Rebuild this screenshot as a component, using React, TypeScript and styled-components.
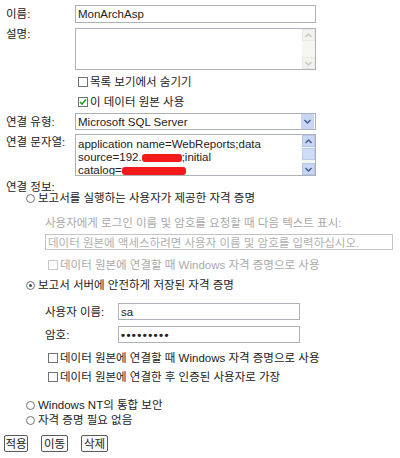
import React from 'react';
import styled, { createGlobalStyle, css } from 'styled-components';

const GlobalStyle = createGlobalStyle`
  body {
    margin: 0;
    background: #fff;
    font-family: 'Liberation Sans', 'Noto Sans CJK KR', sans-serif;
    font-size: 11.5px;
    color: #222;
  }
`;

const Page = styled.div`
  width: 400px;
  height: 458px;
  padding: 5px 0 0 6px;
  box-sizing: border-box;
  overflow: hidden;
`;

const Row = styled.div<{ $mt?: number; $h: number; $indent?: number; $top?: boolean }>`
  display: flex;
  align-items: ${({ $top }) => ($top ? 'flex-start' : 'center')};
  height: ${({ $h }) => $h}px;
  margin-top: ${({ $mt = 0 }) => $mt}px;
  margin-left: ${({ $indent = 0 }) => $indent}px;
  white-space: nowrap;
`;

const Label = styled.div<{ $w: number; $pt?: number }>`
  width: ${({ $w }) => $w}px;
  flex: none;
  padding-top: ${({ $pt = 0 }) => $pt}px;
  line-height: 12px;
`;

const boxBorder = css`
  border: 1px solid #aeb2b8;
  box-sizing: border-box;
  background: #fff;
`;

const TextBox = styled.div<{ $w: number; $disabled?: boolean }>`
  ${boxBorder}
  width: ${({ $w }) => $w}px;
  height: 100%;
  display: flex;
  align-items: center;
  padding-left: 2px;
  overflow: hidden;
  color: ${({ $disabled }) => ($disabled ? '#b0b0b0' : '#222')};
  border-color: ${({ $disabled }) => ($disabled ? '#c4c4c4' : '#aeb2b8')};
`;

const Dots = styled.span`
  font-weight: bold;
  letter-spacing: 1.4px;
`;

const AreaBox = styled.div`
  ${boxBorder}
  width: 241px;
  height: 100%;
  display: flex;
`;

const AreaText = styled.div`
  flex: 1;
  padding: 3px 0 0 2px;
  line-height: 13px;
  white-space: nowrap;
  overflow: hidden;
`;

const ScrollBar = styled.div`
  width: 13px;
  flex: none;
  display: flex;
  flex-direction: column;
  background: #f6f6f3;
`;

const ScrollBtn = styled.div<{ $active?: boolean }>`
  height: 12px;
  display: flex;
  align-items: center;
  justify-content: center;
  background: ${({ $active }) => ($active ? '#c8d6f4' : '#f2f2ee')};
  border: 1px solid ${({ $active }) => ($active ? '#b4c6ec' : '#ebebe6')};
  box-sizing: border-box;
`;

const Thumb = styled.div`
  height: 12px;
  margin: 1px 0;
  background: #cfdcf6;
  border: 1px solid #b9cbef;
  box-sizing: border-box;
`;

const Spacer = styled.div`
  flex: 1;
`;

const SelectBox = styled.div`
  ${boxBorder}
  width: 241px;
  height: 100%;
  display: flex;
  align-items: center;
  padding-left: 2px;
`;

const SelectText = styled.div`
  flex: 1;
`;

const DropBtn = styled.div`
  width: 13px;
  height: 15px;
  margin-right: 1px;
  background: #c8d6f4;
  display: flex;
  align-items: center;
  justify-content: center;
`;

const Redact = styled.span<{ $w: number }>`
  display: inline-block;
  width: ${({ $w }) => $w}px;
  height: 8px;
  background: #f21a1a;
  border-radius: 3px;
  vertical-align: -1px;
`;

const CheckBox = styled.span<{ $disabled?: boolean }>`
  width: 10px;
  height: 10px;
  flex: none;
  box-sizing: border-box;
  border: 1px solid ${({ $disabled }) => ($disabled ? '#c8c8c8' : '#6f7378')};
  background: #fff;
  margin-right: 2px;
  display: flex;
  align-items: center;
  justify-content: center;
`;

const Radio = styled.span<{ $on?: boolean }>`
  width: 9px;
  height: 9px;
  flex: none;
  box-sizing: border-box;
  border: 1px solid #6f7378;
  border-radius: 50%;
  margin-right: 3px;
  display: flex;
  align-items: center;
  justify-content: center;
  &::after {
    content: '';
    width: 3px;
    height: 3px;
    border-radius: 50%;
    background: ${({ $on }) => ($on ? '#2f5f2f' : 'transparent')};
  }
`;

const Text = styled.span<{ $muted?: boolean }>`
  color: ${({ $muted }) => ($muted ? '#a9a9a9' : '#222')};
  line-height: 12px;
`;

const Buttons = styled.div`
  display: flex;
  gap: 13px;
  margin: 9px 0 0 -2px;
  height: 17px;
`;

const Button = styled.button<{ $w: number }>`
  width: ${({ $w }) => $w}px;
  height: 17px;
  padding: 0;
  border: 1px solid #5a5a5a;
  border-radius: 2px;
  background: #fafafa;
  font: inherit;
  color: #222;
  line-height: 14px;
`;

const Chevron = ({ up, color }: { up?: boolean; color: string }) => (
  <svg width="7" height="5" viewBox="0 0 7 5">
    <path
      d={up ? 'M0.5 4 L3.5 1 L6.5 4' : 'M0.5 1 L3.5 4 L6.5 1'}
      fill="none"
      stroke={color}
      strokeWidth="1.4"
    />
  </svg>
);

const Check = () => (
  <svg width="8" height="8" viewBox="0 0 8 8">
    <path d="M1 4 L3 6 L7 1.5" fill="none" stroke="#21a121" strokeWidth="1.6" />
  </svg>
);

export default function App() {
  return (
    <Page>
      <GlobalStyle />
      <Row $h={18}>
        <Label $w={69}>이름:</Label>
        <TextBox $w={241}>MonArchAsp</TextBox>
      </Row>
      <Row $h={42} $mt={5} $top>
        <Label $w={69}>설명:</Label>
        <AreaBox>
          <AreaText />
          <ScrollBar>
            <ScrollBtn>
              <Chevron up color="#c8c8c0" />
            </ScrollBtn>
            <Spacer />
            <ScrollBtn>
              <Chevron color="#c8c8c0" />
            </ScrollBtn>
          </ScrollBar>
        </AreaBox>
      </Row>
      <Row $h={20} $mt={2} $indent={72}>
        <CheckBox />
        <Text>목록 보기에서 숨기기</Text>
      </Row>
      <Row $h={20} $indent={72}>
        <CheckBox>
          <Check />
        </CheckBox>
        <Text>이 데이터 원본 사용</Text>
      </Row>
      <Row $h={17} $mt={1}>
        <Label $w={69}>연결 유형:</Label>
        <SelectBox>
          <SelectText>Microsoft SQL Server</SelectText>
          <DropBtn>
            <Chevron color="#3e5a8c" />
          </DropBtn>
        </SelectBox>
      </Row>
      <Row $h={42} $mt={4} $top>
        <Label $w={69} $pt={2}>연결 문자열:</Label>
        <AreaBox>
          <AreaText>
            application name=WebReports;data
            <br />
            source=192.
            <Redact $w={40} />
            ;initial
            <br />
            catalog=
            <Redact $w={64} />
          </AreaText>
          <ScrollBar>
            <ScrollBtn $active>
              <Chevron up color="#3e5a8c" />
            </ScrollBtn>
            <Thumb />
            <Spacer />
            <ScrollBtn $active>
              <Chevron color="#3e5a8c" />
            </ScrollBtn>
          </ScrollBar>
        </AreaBox>
      </Row>
      <Row $h={11} $mt={5}>
        <Text>연결 정보:</Text>
      </Row>
      <Row $h={12} $indent={20}>
        <Radio />
        <Text>보고서를 실행하는 사용자가 제공한 자격 증명</Text>
      </Row>
      <Row $h={12} $mt={13} $indent={39}>
        <Text $muted>사용자에게 로그인 이름 및 암호를 요청할 때 다음 텍스트 표시:</Text>
      </Row>
      <Row $h={16} $mt={5} $indent={39}>
        <TextBox $w={348} $disabled>
          데이터 원본에 액세스하려면 사용자 이름 및 암호를 입력하십시오.
        </TextBox>
      </Row>
      <Row $h={12} $mt={9} $indent={42}>
        <CheckBox $disabled />
        <Text $muted>데이터 원본에 연결할 때 Windows 자격 증명으로 사용</Text>
      </Row>
      <Row $h={12} $mt={8} $indent={20}>
        <Radio $on />
        <Text>보고서 서버에 안전하게 저장된 자격 증명</Text>
      </Row>
      <Row $h={17} $mt={12} $indent={39}>
        <Label $w={73}>사용자 이름:</Label>
        <TextBox $w={182}>sa</TextBox>
      </Row>
      <Row $h={17} $mt={6} $indent={39}>
        <Label $w={73}>암호:</Label>
        <TextBox $w={182}>
          <Dots>•••••••••</Dots>
        </TextBox>
      </Row>
      <Row $h={12} $mt={9} $indent={42}>
        <CheckBox />
        <Text>데이터 원본에 연결할 때 Windows 자격 증명으로 사용</Text>
      </Row>
      <Row $h={12} $mt={7} $indent={42}>
        <CheckBox />
        <Text>데이터 원본에 연결한 후 인증된 사용자로 가장</Text>
      </Row>
      <Row $h={12} $mt={16} $indent={20}>
        <Radio />
        <Text>Windows NT의 통합 보안</Text>
      </Row>
      <Row $h={12} $mt={3} $indent={20}>
        <Radio />
        <Text>자격 증명 필요 없음</Text>
      </Row>
      <Buttons>
        <Button $w={24}>적용</Button>
        <Button $w={27}>이동</Button>
        <Button $w={27}>삭제</Button>
      </Buttons>
    </Page>
  );
}
